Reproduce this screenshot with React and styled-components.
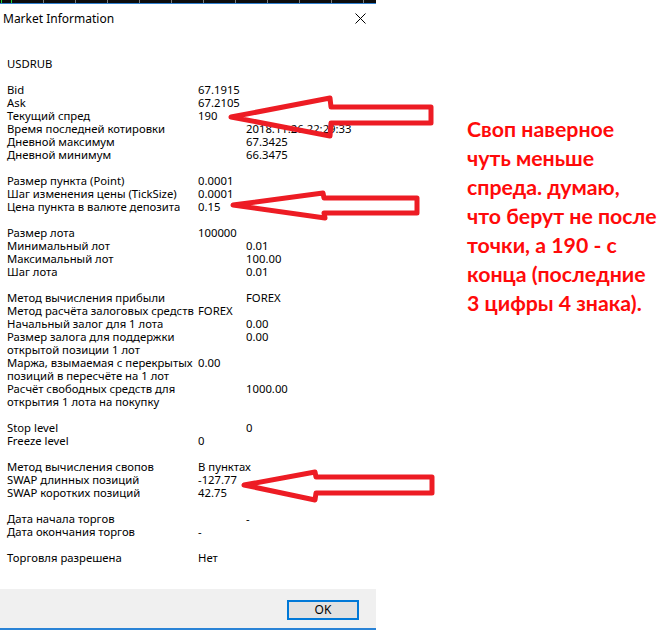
import React from "react";
import styled, { createGlobalStyle } from "styled-components";

const Global = createGlobalStyle`
  html, body { margin: 0; padding: 0; background: #fff; }
  body { font-family: "Noto Sans", "Segoe UI", sans-serif; }
`;

const Page = styled.div`
  position: relative;
  width: 661px;
  height: 630px;
  display: flex;
  overflow: hidden;
  background: #fff;
`;

const Dialog = styled.div`
  width: 376px;
  height: 630px;
  flex: none;
  display: flex;
  flex-direction: column;
  background: #fff;
  color: #000;
  font-size: 11.3px;
`;

/* strip of the chart window behind the dialog */
const Strip = styled.div`
  height: 3px;
  flex: none;
  border-bottom: 1px solid #2f80d0;
  background:
    linear-gradient(#22d33a, #22d33a) 1px 0 / 1px 100% no-repeat,
    linear-gradient(#22d33a, #22d33a) 11px 0 / 1px 100% no-repeat,
    linear-gradient(to right, #7c7c7c 0 1px, transparent 1px) 11px 0 / 32px 100% repeat-x,
    #0c0c0c;
`;

const TitleBar = styled.div`
  height: 28px;
  flex: none;
  display: flex;
  align-items: center;
  justify-content: space-between;
  padding: 0 10px 0 3px;
`;

const Title = styled.span`
  font-size: 12px;
  color: #000;
`;

const Body = styled.div`
  flex: 1;
  padding: 25px 0 0 7px;
  line-height: 13px;
`;

const Group = styled.div`
  margin-bottom: 13px;
`;

const Row = styled.div`
  display: grid;
  grid-template-columns: 191px 1fr;
  white-space: nowrap;
`;

const Value = styled.span`
  padding-left: ${(p) => (p.$far ? "48px" : "0")};
`;

const Footer = styled.div`
  height: 41px;
  flex: none;
  display: flex;
  justify-content: flex-end;
  align-items: flex-start;
  padding: 11px 17px 0 0;
  box-sizing: border-box;
  background: #f0f0f0;
  border-bottom: 2px solid #2a83d6;
`;

const OkButton = styled.button`
  width: 72px;
  height: 20px;
  box-sizing: border-box;
  border: 2px solid #0078d7;
  background: #e1e1e1;
  font-family: inherit;
  font-size: 12px;
  color: #000;
  padding: 0;
  line-height: 14px;
`;

const Note = styled.div`
  margin-left: 91px;
  padding-top: 115px;
  color: #ff0a0a;
  font-family: Lato, "Noto Sans", sans-serif;
  font-weight: 700;
  font-size: 21.3px;
  line-height: 29px;
  white-space: nowrap;
`;

const Overlay = styled.svg`
  position: absolute;
  left: 0;
  top: 0;
  pointer-events: none;
`;

const groups = [
  [
    ["Bid", "67.1915"],
    ["Ask", "67.2105"],
    ["Текущий спред", "190"],
    ["Время последней котировки", "2018.11.26 22:29:33", true],
    ["Дневной максимум", "67.3425", true],
    ["Дневной минимум", "66.3475", true],
  ],
  [
    ["Размер пункта (Point)", "0.0001"],
    ["Шаг изменения цены (TickSize)", "0.0001"],
    ["Цена пункта в валюте депозита", "0.15"],
  ],
  [
    ["Размер лота", "100000"],
    ["Минимальный лот", "0.01", true],
    ["Максимальный лот", "100.00", true],
    ["Шаг лота", "0.01", true],
  ],
  [
    ["Метод вычисления прибыли", "FOREX", true],
    ["Метод расчёта залоговых средств", "FOREX"],
    ["Начальный залог для 1 лота", "0.00", true],
    [["Размер залога для поддержки", "открытой позиции 1 лот"], "0.00", true],
    [["Маржа, взымаемая с перекрытых", "позиций в пересчёте на 1 лот"], "0.00"],
    [["Расчёт свободных средств для", "открытия 1 лота на покупку"], "1000.00", true],
  ],
  [
    ["Stop level", "0", true],
    ["Freeze level", "0"],
  ],
  [
    ["Метод вычисления свопов", "В пунктах"],
    ["SWAP длинных позиций", "-127.77"],
    ["SWAP коротких позиций", "42.75"],
  ],
  [
    ["Дата начала торгов", "-", true],
    ["Дата окончания торгов", "-"],
  ],
  [["Торговля разрешена", "Нет"]],
];

const CloseIcon = () => (
  <svg width="11" height="11" viewBox="0 0 11 11">
    <path d="M0.5 0.5L10.5 10.5M10.5 0.5L0.5 10.5" stroke="#000" strokeWidth="1" fill="none" />
  </svg>
);

const arrows = [
  "231,117 330,98 331,107 431,107 431,123 331,123 330,136",
  "233,205 323,193 324,198 417,198 417,213 324,213 325,218",
  "244,485 315,472 316,477 432,477 432,493 316,493 315,500",
];

const noteLines = [
  "Своп наверное",
  "чуть меньше",
  "спреда. думаю,",
  "что берут не после",
  "точки, а 190 - с",
  "конца (последние",
  "3 цифры 4 знака).",
];

export default function App() {
  return (
    <Page>
      <Global />
      <Dialog>
        <Strip />
        <TitleBar>
          <Title>Market Information</Title>
          <CloseIcon />
        </TitleBar>
        <Body>
          <Group>USDRUB</Group>
          {groups.map((g, gi) => (
            <Group key={gi}>
              {g.map(([label, value, far], ri) => (
                <Row key={ri}>
                  <span>
                    {Array.isArray(label) ? (
                      <>
                        {label[0]}
                        <br />
                        {label[1]}
                      </>
                    ) : (
                      label
                    )}
                  </span>
                  <Value $far={far}>{value}</Value>
                </Row>
              ))}
            </Group>
          ))}
        </Body>
        <Footer>
          <OkButton>OK</OkButton>
        </Footer>
      </Dialog>
      <Note>
        {noteLines.map((l, i) => (
          <div key={i}>{l}</div>
        ))}
      </Note>
      <Overlay width="661" height="630" viewBox="0 0 661 630">
        {arrows.map((pts, i) => (
          <polygon
            key={i}
            points={pts}
            fill="none"
            stroke="#ed1c24"
            strokeWidth="5"
            strokeLinejoin="round"
          />
        ))}
      </Overlay>
    </Page>
  );
}
